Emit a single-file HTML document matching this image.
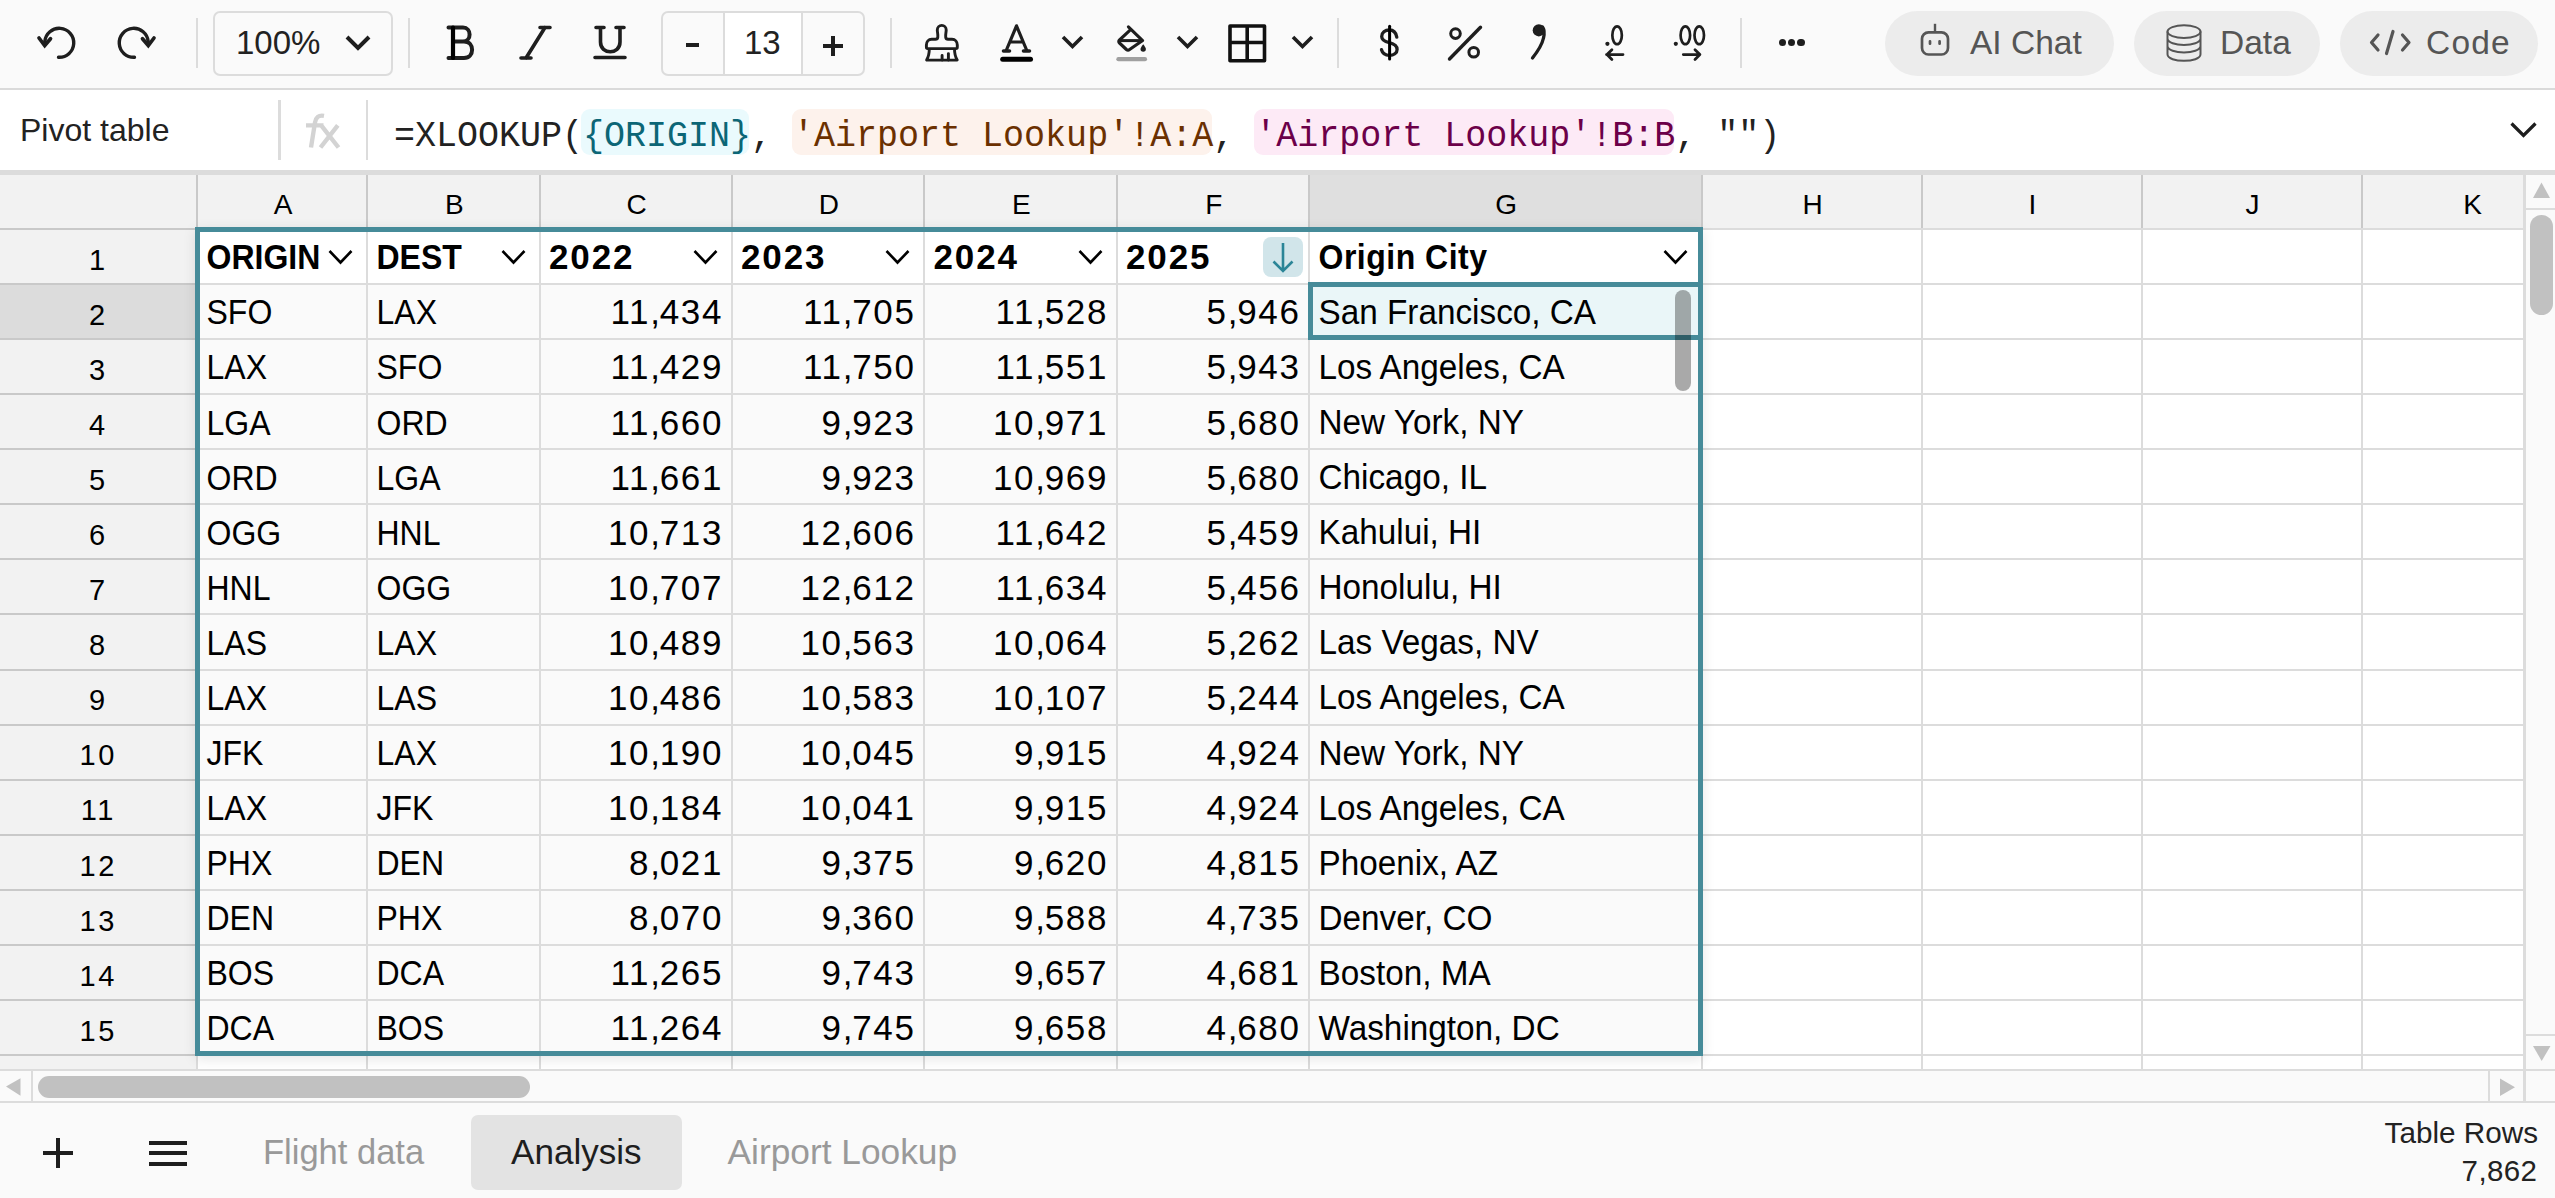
<!DOCTYPE html>
<html><head><meta charset="utf-8"><title>Sheet</title>
<style>
html,body{margin:0;padding:0;}
body{width:2555px;height:1198px;position:relative;overflow:hidden;background:#fafafa;font-family:'Liberation Sans', sans-serif;}
body>div,body>svg{position:absolute;box-sizing:content-box;}
</style></head><body>
<div style="left:0px;top:0px;width:2555px;height:88px;background:#fafafa;"></div>
<div style="left:0px;top:88px;width:2555px;height:2px;background:#dadada;"></div>
<div style="left:0px;top:90px;width:2555px;height:80px;background:#ffffff;"></div>
<div style="left:0px;top:170px;width:2555px;height:5px;background:#dcdcdc;"></div>
<svg style="left:30px;top:20px;" width="60" height="50" viewBox="0 0 60 50"><path d="M28.5 37.3 A14.5 14.5 0 1 0 14.8 21.5" fill="none" stroke="#1e1e1e" stroke-width="3.4" stroke-linecap="round"/><path d="M9 18 L14.7 25.5 L20.5 18.7" fill="none" stroke="#1e1e1e" stroke-width="3.7" stroke-linecap="round" stroke-linejoin="miter"/></svg>
<svg style="left:106px;top:20px;" width="60" height="50" viewBox="0 0 60 50"><path d="M28.5 37.3 A14.5 14.5 0 1 1 42.2 21.5" fill="none" stroke="#1e1e1e" stroke-width="3.4" stroke-linecap="round"/><path d="M48 18 L42.3 25.5 L36.5 18.7" fill="none" stroke="#1e1e1e" stroke-width="3.7" stroke-linecap="round" stroke-linejoin="miter"/></svg>
<div style="left:196px;top:18px;width:2px;height:50px;background:#dcdcdc;"></div>
<div style="left:408px;top:18px;width:2px;height:50px;background:#dcdcdc;"></div>
<div style="left:890px;top:18px;width:2px;height:50px;background:#dcdcdc;"></div>
<div style="left:1337px;top:18px;width:2px;height:50px;background:#dcdcdc;"></div>
<div style="left:1740px;top:18px;width:2px;height:50px;background:#dcdcdc;"></div>
<div style="left:213px;top:11px;width:176px;height:61px;border:2px solid #dcdcdc;border-radius:7px;background:#fafafa"></div>
<div style="top:12.86px;height:60px;line-height:60px;font-size:33px;color:#222;font-family:'Liberation Sans', sans-serif;white-space:pre;left:236.00px;">100%</div>
<svg style="left:340px;top:30px;" width="36" height="26" viewBox="0 0 36 26"><path d="M7 7 L18 18 L29 7" fill="none" stroke="#1e1e1e" stroke-width="4"/></svg>
<svg style="left:440px;top:20px;" width="40" height="46" viewBox="0 0 40 46"><path d="M8.5 7.5 H23 C31.8 7.5 31.8 21.5 23 21.5 H13 M13 21.5 H24 C34.8 21.5 34.8 38 24 38 H8.5" fill="none" stroke="#1e1e1e" stroke-width="4" stroke-linecap="round" stroke-linejoin="round"/><path d="M13 7.5 V38" fill="none" stroke="#000" stroke-width="4.2" stroke-linecap="round"/></svg>
<svg style="left:510px;top:20px;" width="50" height="46" viewBox="0 0 50 46"><path d="M30 7.5 H40 M11 38 H21 M35 7.5 L16 38" fill="none" stroke="#1e1e1e" stroke-width="3.6" stroke-linecap="round"/></svg>
<svg style="left:585px;top:20px;" width="50" height="46" viewBox="0 0 50 46"><path d="M11 7.5 H19 M31 7.5 H39 M15.5 7.5 V22 C15.5 35 35 35 35 22 V7.5 M10 37.5 H40" fill="none" stroke="#1e1e1e" stroke-width="3.6" stroke-linecap="round"/></svg>
<div style="left:661px;top:11px;width:200px;height:61px;border:2px solid #dcdcdc;border-radius:7px;background:#fafafa;overflow:hidden"><div style="position:absolute;left:60px;top:0;width:76px;height:61px;background:#fff;border-left:2px solid #dcdcdc;border-right:2px solid #dcdcdc"></div></div>
<div style="left:686px;top:42.5px;width:13px;height:4px;background:#1e1e1e;"></div>
<div style="top:12.86px;height:60px;line-height:60px;font-size:33px;color:#222;font-family:'Liberation Sans', sans-serif;white-space:pre;left:744.00px;">13</div>
<div style="left:822.5px;top:43.5px;width:20px;height:4px;background:#1e1e1e;"></div>
<div style="left:830.5px;top:35.5px;width:4px;height:20px;background:#1e1e1e;"></div>
<svg style="left:920px;top:20px;" width="44" height="46" viewBox="0 0 44 46"><path d="M17.8 17.2 C18.2 15 17.3 12 17.3 10 C17.3 7.3 19.3 5.4 21.75 5.4 C24.2 5.4 26.2 7.3 26.2 10 C26.2 12 25.3 15 25.7 17.2 C25.9 18.5 26.8 19.2 28 19.2 H32 C35.2 19.2 37.3 21.7 37.3 25 V27.3 C37.3 28.1 36.8 28.6 36 28.6 H7.7 C6.9 28.6 6.4 28.1 6.4 27.3 V25 C6.4 21.7 8.5 19.2 11.7 19.2 H15.5 C16.7 19.2 17.6 18.5 17.8 17.2 Z" fill="none" stroke="#1e1e1e" stroke-width="2.9" stroke-linejoin="round"/><path d="M9.3 28.6 C9.3 33 8.5 37 6.6 40.1 H37.2 C35.3 37 34.5 33 34.5 28.6" fill="none" stroke="#1e1e1e" stroke-width="2.9" stroke-linejoin="round"/><path d="M22.1 35.5 V40.1 M28.4 33.6 V40.1" fill="none" stroke="#1e1e1e" stroke-width="2.9" stroke-linecap="round"/></svg>
<svg style="left:995px;top:20px;" width="44" height="46" viewBox="0 0 44 46"><path d="M11 31 L21.5 5.8 L32 31 M15.3 22 H27.7" fill="none" stroke="#1e1e1e" stroke-width="3.2" stroke-linejoin="round"/><path d="M8.5 31 H14.5 M28.5 31 H34.5" fill="none" stroke="#1e1e1e" stroke-width="3.6" stroke-linecap="round"/><path d="M7.7 39.3 H35.5" fill="none" stroke="#000" stroke-width="5" stroke-linecap="round"/></svg>
<svg style="left:1055px;top:30px;" width="36" height="26" viewBox="0 0 36 26"><path d="M8 7 L17.5 16.5 L27 7" fill="none" stroke="#1e1e1e" stroke-width="3.6"/></svg>
<svg style="left:1110px;top:20px;" width="44" height="46" viewBox="0 0 44 46"><path d="M18.4 6.8 L32.6 20.6 L19.6 29.6 C18.7 30.3 17.3 30.3 16.4 29.5 L9.5 23 C8.5 22.1 8.5 20.9 9.5 20 L20.6 9.6" fill="none" stroke="#1e1e1e" stroke-width="3.1" stroke-linecap="round" stroke-linejoin="round"/><path d="M9 20.6 H32.6" fill="none" stroke="#1e1e1e" stroke-width="3"/><path d="M33.2 24.2 C35 26.5 35.9 28 35.9 29 A2.7 2.7 0 0 1 30.5 29 C30.5 28 31.4 26.5 33.2 24.2 Z" fill="#1e1e1e"/><path d="M8.4 39.2 H35" fill="none" stroke="#a0a0a0" stroke-width="4.2" stroke-linecap="round"/></svg>
<svg style="left:1170px;top:30px;" width="36" height="26" viewBox="0 0 36 26"><path d="M8 7 L17.5 16.5 L27 7" fill="none" stroke="#1e1e1e" stroke-width="3.6"/></svg>
<svg style="left:1222px;top:18px;" width="50" height="50" viewBox="0 0 50 50"><path d="M8 8 H42.5 V42.7 H8 Z M25.2 8 V42.7 M8 24.5 H42.5" fill="none" stroke="#111" stroke-width="3.6" stroke-linejoin="round"/></svg>
<svg style="left:1285px;top:30px;" width="36" height="26" viewBox="0 0 36 26"><path d="M8 7 L17.5 16.5 L27 7" fill="none" stroke="#1e1e1e" stroke-width="3.6"/></svg>
<svg style="left:1370px;top:20px;" width="40" height="46" viewBox="0 0 40 46"><path d="M26.8 17.2 C26 12.5 23 10 19.4 10 C15 10 11.7 12.8 11.7 16.4 C11.7 20 14.5 21.5 19.4 22.7 C24.5 24 27.1 26 27.1 29.5 C27.1 33 23.8 35.3 19.4 35.3 C15.5 35.3 12.5 33.2 11.5 29.7" fill="none" stroke="#1e1e1e" stroke-width="3.3" stroke-linecap="round"/><path d="M19.6 6.2 V39" fill="none" stroke="#000" stroke-width="3" stroke-linecap="round"/></svg>
<svg style="left:1440px;top:20px;" width="50" height="46" viewBox="0 0 50 46"><path d="M9.5 39 L40.5 7.2" fill="none" stroke="#1e1e1e" stroke-width="3.4" stroke-linecap="round"/><circle cx="15.5" cy="13.6" r="4.8" fill="none" stroke="#1e1e1e" stroke-width="3"/><circle cx="33.7" cy="32.2" r="4.8" fill="none" stroke="#1e1e1e" stroke-width="3"/></svg>
<svg style="left:1520px;top:20px;" width="40" height="46" viewBox="0 0 40 46"><circle cx="18.8" cy="10.3" r="6.1" fill="#1e1e1e"/><path d="M22.5 7 C24.5 10 24.5 14 23.5 18 C22 25 18 31 12.5 38" fill="none" stroke="#1e1e1e" stroke-width="3.3" stroke-linecap="round"/></svg>
<svg style="left:1595px;top:18px;" width="120" height="48" viewBox="0 0 120 48"><circle cx="12.4" cy="25.8" r="2.1" fill="#1e1e1e"/><ellipse cx="22.1" cy="17.25" rx="4.75" ry="8.95" fill="none" stroke="#1e1e1e" stroke-width="2.7"/><path d="M11.5 36.6 H28 M16.9 31.7 L12 36.6 L16.9 41.5" fill="none" stroke="#1e1e1e" stroke-width="2.8" stroke-linecap="round" stroke-linejoin="round"/><circle cx="80.8" cy="25.8" r="2.1" fill="#1e1e1e"/><ellipse cx="90.35" cy="17.25" rx="4.75" ry="8.95" fill="none" stroke="#1e1e1e" stroke-width="2.7"/><ellipse cx="104.25" cy="17.25" rx="4.75" ry="8.95" fill="none" stroke="#1e1e1e" stroke-width="2.7"/><path d="M88.3 36.6 H104.8 M100 31.7 L104.9 36.6 L100 41.5" fill="none" stroke="#1e1e1e" stroke-width="2.8" stroke-linecap="round" stroke-linejoin="round"/></svg>
<div style="left:1778.5px;top:39px;width:7.2px;height:7.2px;border-radius:50%;background:#1e1e1e"></div>
<div style="left:1787.9px;top:39px;width:7.2px;height:7.2px;border-radius:50%;background:#1e1e1e"></div>
<div style="left:1797.4px;top:39px;width:7.2px;height:7.2px;border-radius:50%;background:#1e1e1e"></div>
<div style="left:1885px;top:11px;width:229px;height:65px;border-radius:33px;background:#ececec"></div>
<div style="left:2134px;top:11px;width:186px;height:65px;border-radius:33px;background:#ececec"></div>
<div style="left:2340px;top:11px;width:198px;height:65px;border-radius:33px;background:#ececec"></div>
<svg style="left:1915px;top:20px;" width="40" height="40" viewBox="0 0 40 40"><rect x="7" y="12.3" width="26" height="22.2" rx="6.5" fill="none" stroke="#555555" stroke-width="2.7"/><path d="M20 3.8 V12.3" stroke="#555555" stroke-width="2.4"/><path d="M15 21.3 V23.7 M24.6 21.3 V23.7" stroke="#555555" stroke-width="2.7" stroke-linecap="round"/></svg>
<div style="top:13.39px;height:60px;line-height:60px;font-size:33.5px;color:#555555;font-family:'Liberation Sans', sans-serif;white-space:pre;left:1970.00px;">AI Chat</div>
<svg style="left:2163px;top:20px;" width="44" height="46" viewBox="0 0 44 46"><ellipse cx="21" cy="11.6" rx="16.5" ry="6.4" fill="none" stroke="#555555" stroke-width="2"/><path d="M4.5 11.6 V34.3 C4.5 43 37.5 43 37.5 34.3 V11.6 M4.5 18.5 C4.5 27 37.5 27 37.5 18.5 M4.5 26 C4.5 34.5 37.5 34.5 37.5 26" fill="none" stroke="#555555" stroke-width="2"/></svg>
<div style="top:13.39px;height:60px;line-height:60px;font-size:33.5px;color:#555555;font-family:'Liberation Sans', sans-serif;white-space:pre;left:2220.00px;">Data</div>
<svg style="left:2365px;top:20px;" width="50" height="46" viewBox="0 0 50 46"><path d="M13 15 L6.5 22.5 L13 30 M37.5 15 L44 22.5 L37.5 30 M28 11.5 L21.5 33.5" fill="none" stroke="#555555" stroke-width="3.2" stroke-linecap="round" stroke-linejoin="round"/></svg>
<div style="top:13.39px;height:60px;line-height:60px;font-size:33.5px;color:#555555;font-family:'Liberation Sans', sans-serif;white-space:pre;letter-spacing:1.2px;left:2426.00px;">Code</div>
<div style="top:100.31px;height:60px;line-height:60px;font-size:32px;color:#222;font-family:'Liberation Sans', sans-serif;white-space:pre;left:20.00px;">Pivot table</div>
<div style="left:278px;top:100px;width:3px;height:60px;background:#dcdcdc;"></div>
<svg style="left:300px;top:105px;" width="45" height="50" viewBox="0 0 45 50"><path d="M24 10.8 C18.5 9.8 15.8 12.5 15 17.5 L11 42.5 M6 20.4 H23.5 M21.2 20.4 L38.5 42.5 M37.8 20.4 L20.5 42.5" fill="none" stroke="#d3d3d3" stroke-width="4.4"/></svg>
<div style="left:366px;top:100px;width:2px;height:60px;background:#dcdcdc;"></div>
<div style="left:581px;top:109px;width:168px;height:46px;border-radius:9px;background:#eafafd"></div>
<div style="left:792px;top:109px;width:420px;height:46px;border-radius:9px;background:#fdf2ec"></div>
<div style="left:1254px;top:109px;width:420px;height:46px;border-radius:9px;background:#fdeaf6"></div>
<div style="top:106.87px;height:60px;line-height:60px;font-size:35px;color:#222;font-family:'Liberation Mono', monospace;white-space:pre;transform:scaleY(1.075);transform-origin:0 42.13px;left:394.00px;"><span style="color:#222">=XLOOKUP(</span><span style="color:#0c6676">{ORIGIN}</span><span style="color:#222">, </span><span style="color:#6b3000">'Airport Lookup'!A:A</span><span style="color:#222">, </span><span style="color:#6c0049">'Airport Lookup'!B:B</span><span style="color:#222">, "")</span></div>
<svg style="left:2502px;top:113px;" width="40" height="32" viewBox="0 0 40 32"><path d="M9.5 10.5 L21.5 22.5 L33.5 10.5" fill="none" stroke="#1e1e1e" stroke-width="3.2"/></svg>
<div style="left:198px;top:230px;width:2325px;height:839px;background:#ffffff;"></div>
<div style="left:197px;top:284px;width:1505px;height:772px;background:#fafafa;"></div>
<div style="left:0px;top:175px;width:196px;height:894px;background:#f2f2f2;"></div>
<div style="left:196px;top:175px;width:2327px;height:53px;background:#f2f2f2;"></div>
<div style="left:1309px;top:175px;width:392.5px;height:53px;background:#dfdfdf;"></div>
<div style="left:0px;top:285px;width:196px;height:53px;background:#dcdcdc;"></div>
<div style="left:198px;top:228px;width:2325px;height:2px;background:#c9c9c9;"></div>
<div style="left:0px;top:228px;width:196px;height:2px;background:#c9c9c9;"></div>
<div style="left:198px;top:283px;width:2325px;height:2px;background:#dcdcdc;"></div>
<div style="left:0px;top:283px;width:196px;height:2px;background:#c9c9c9;"></div>
<div style="left:198px;top:338px;width:2325px;height:2px;background:#dcdcdc;"></div>
<div style="left:0px;top:338px;width:196px;height:2px;background:#c9c9c9;"></div>
<div style="left:198px;top:393px;width:2325px;height:2px;background:#dcdcdc;"></div>
<div style="left:0px;top:393px;width:196px;height:2px;background:#c9c9c9;"></div>
<div style="left:198px;top:448px;width:2325px;height:2px;background:#dcdcdc;"></div>
<div style="left:0px;top:448px;width:196px;height:2px;background:#c9c9c9;"></div>
<div style="left:198px;top:503px;width:2325px;height:2px;background:#dcdcdc;"></div>
<div style="left:0px;top:503px;width:196px;height:2px;background:#c9c9c9;"></div>
<div style="left:198px;top:558px;width:2325px;height:2px;background:#dcdcdc;"></div>
<div style="left:0px;top:558px;width:196px;height:2px;background:#c9c9c9;"></div>
<div style="left:198px;top:613px;width:2325px;height:2px;background:#dcdcdc;"></div>
<div style="left:0px;top:613px;width:196px;height:2px;background:#c9c9c9;"></div>
<div style="left:198px;top:669px;width:2325px;height:2px;background:#dcdcdc;"></div>
<div style="left:0px;top:669px;width:196px;height:2px;background:#c9c9c9;"></div>
<div style="left:198px;top:724px;width:2325px;height:2px;background:#dcdcdc;"></div>
<div style="left:0px;top:724px;width:196px;height:2px;background:#c9c9c9;"></div>
<div style="left:198px;top:779px;width:2325px;height:2px;background:#dcdcdc;"></div>
<div style="left:0px;top:779px;width:196px;height:2px;background:#c9c9c9;"></div>
<div style="left:198px;top:834px;width:2325px;height:2px;background:#dcdcdc;"></div>
<div style="left:0px;top:834px;width:196px;height:2px;background:#c9c9c9;"></div>
<div style="left:198px;top:889px;width:2325px;height:2px;background:#dcdcdc;"></div>
<div style="left:0px;top:889px;width:196px;height:2px;background:#c9c9c9;"></div>
<div style="left:198px;top:944px;width:2325px;height:2px;background:#dcdcdc;"></div>
<div style="left:0px;top:944px;width:196px;height:2px;background:#c9c9c9;"></div>
<div style="left:198px;top:999px;width:2325px;height:2px;background:#dcdcdc;"></div>
<div style="left:0px;top:999px;width:196px;height:2px;background:#c9c9c9;"></div>
<div style="left:198px;top:1054px;width:2325px;height:2px;background:#dcdcdc;"></div>
<div style="left:0px;top:1054px;width:196px;height:2px;background:#c9c9c9;"></div>
<div style="left:0px;top:228px;width:196px;height:2px;background:#c9c9c9;"></div>
<div style="left:196px;top:227.5px;width:2327px;height:2.5px;background:#dcdcdc;"></div>
<div style="left:196px;top:175px;width:2px;height:55px;background:#c9c9c9;"></div>
<div style="left:196px;top:230px;width:2px;height:839px;background:#dcdcdc;"></div>
<div style="left:366px;top:175px;width:2px;height:53px;background:#c9c9c9;"></div>
<div style="left:366px;top:230px;width:2px;height:839px;background:#dcdcdc;"></div>
<div style="left:538.5px;top:175px;width:2px;height:53px;background:#c9c9c9;"></div>
<div style="left:538.5px;top:230px;width:2px;height:839px;background:#dcdcdc;"></div>
<div style="left:730.5px;top:175px;width:2px;height:53px;background:#c9c9c9;"></div>
<div style="left:730.5px;top:230px;width:2px;height:839px;background:#dcdcdc;"></div>
<div style="left:923px;top:175px;width:2px;height:53px;background:#c9c9c9;"></div>
<div style="left:923px;top:230px;width:2px;height:839px;background:#dcdcdc;"></div>
<div style="left:1115.5px;top:175px;width:2px;height:53px;background:#c9c9c9;"></div>
<div style="left:1115.5px;top:230px;width:2px;height:839px;background:#dcdcdc;"></div>
<div style="left:1308px;top:175px;width:2px;height:53px;background:#c9c9c9;"></div>
<div style="left:1308px;top:230px;width:2px;height:839px;background:#dcdcdc;"></div>
<div style="left:1700.5px;top:175px;width:2px;height:53px;background:#c9c9c9;"></div>
<div style="left:1700.5px;top:230px;width:2px;height:839px;background:#dcdcdc;"></div>
<div style="left:1920.5px;top:175px;width:2px;height:53px;background:#c9c9c9;"></div>
<div style="left:1920.5px;top:230px;width:2px;height:839px;background:#dcdcdc;"></div>
<div style="left:2140.5px;top:175px;width:2px;height:53px;background:#c9c9c9;"></div>
<div style="left:2140.5px;top:230px;width:2px;height:839px;background:#dcdcdc;"></div>
<div style="left:2360.5px;top:175px;width:2px;height:53px;background:#c9c9c9;"></div>
<div style="left:2360.5px;top:230px;width:2px;height:839px;background:#dcdcdc;"></div>
<div style="top:175.14px;height:60px;line-height:60px;font-size:28px;color:#000;font-family:'Liberation Sans', sans-serif;white-space:pre;left:-17.00px;width:600px;text-align:center;">A</div>
<div style="top:175.14px;height:60px;line-height:60px;font-size:28px;color:#000;font-family:'Liberation Sans', sans-serif;white-space:pre;left:154.25px;width:600px;text-align:center;">B</div>
<div style="top:175.14px;height:60px;line-height:60px;font-size:28px;color:#000;font-family:'Liberation Sans', sans-serif;white-space:pre;left:336.50px;width:600px;text-align:center;">C</div>
<div style="top:175.14px;height:60px;line-height:60px;font-size:28px;color:#000;font-family:'Liberation Sans', sans-serif;white-space:pre;left:528.75px;width:600px;text-align:center;">D</div>
<div style="top:175.14px;height:60px;line-height:60px;font-size:28px;color:#000;font-family:'Liberation Sans', sans-serif;white-space:pre;left:721.25px;width:600px;text-align:center;">E</div>
<div style="top:175.14px;height:60px;line-height:60px;font-size:28px;color:#000;font-family:'Liberation Sans', sans-serif;white-space:pre;left:913.75px;width:600px;text-align:center;">F</div>
<div style="top:175.14px;height:60px;line-height:60px;font-size:28px;color:#000;font-family:'Liberation Sans', sans-serif;white-space:pre;left:1206.25px;width:600px;text-align:center;">G</div>
<div style="top:175.14px;height:60px;line-height:60px;font-size:28px;color:#000;font-family:'Liberation Sans', sans-serif;white-space:pre;left:1512.50px;width:600px;text-align:center;">H</div>
<div style="top:175.14px;height:60px;line-height:60px;font-size:28px;color:#000;font-family:'Liberation Sans', sans-serif;white-space:pre;left:1732.50px;width:600px;text-align:center;">I</div>
<div style="top:175.14px;height:60px;line-height:60px;font-size:28px;color:#000;font-family:'Liberation Sans', sans-serif;white-space:pre;left:1952.50px;width:600px;text-align:center;">J</div>
<div style="top:175.14px;height:60px;line-height:60px;font-size:28px;color:#000;font-family:'Liberation Sans', sans-serif;white-space:pre;left:2172.50px;width:600px;text-align:center;">K</div>
<div style="top:229.75px;height:60px;line-height:60px;font-size:29px;color:#000;font-family:'Liberation Sans', sans-serif;white-space:pre;left:-203.00px;width:600px;text-align:center;">1</div>
<div style="top:284.82px;height:60px;line-height:60px;font-size:29px;color:#000;font-family:'Liberation Sans', sans-serif;white-space:pre;left:-203.00px;width:600px;text-align:center;">2</div>
<div style="top:339.89px;height:60px;line-height:60px;font-size:29px;color:#000;font-family:'Liberation Sans', sans-serif;white-space:pre;left:-203.00px;width:600px;text-align:center;">3</div>
<div style="top:394.96px;height:60px;line-height:60px;font-size:29px;color:#000;font-family:'Liberation Sans', sans-serif;white-space:pre;left:-203.00px;width:600px;text-align:center;">4</div>
<div style="top:450.03px;height:60px;line-height:60px;font-size:29px;color:#000;font-family:'Liberation Sans', sans-serif;white-space:pre;left:-203.00px;width:600px;text-align:center;">5</div>
<div style="top:505.10px;height:60px;line-height:60px;font-size:29px;color:#000;font-family:'Liberation Sans', sans-serif;white-space:pre;left:-203.00px;width:600px;text-align:center;">6</div>
<div style="top:560.17px;height:60px;line-height:60px;font-size:29px;color:#000;font-family:'Liberation Sans', sans-serif;white-space:pre;left:-203.00px;width:600px;text-align:center;">7</div>
<div style="top:615.24px;height:60px;line-height:60px;font-size:29px;color:#000;font-family:'Liberation Sans', sans-serif;white-space:pre;left:-203.00px;width:600px;text-align:center;">8</div>
<div style="top:670.31px;height:60px;line-height:60px;font-size:29px;color:#000;font-family:'Liberation Sans', sans-serif;white-space:pre;left:-203.00px;width:600px;text-align:center;">9</div>
<div style="top:725.38px;height:60px;line-height:60px;font-size:29px;color:#000;font-family:'Liberation Sans', sans-serif;white-space:pre;letter-spacing:2.5px;left:-201.75px;width:600px;text-align:center;">10</div>
<div style="top:780.45px;height:60px;line-height:60px;font-size:29px;color:#000;font-family:'Liberation Sans', sans-serif;white-space:pre;letter-spacing:2.5px;left:-201.75px;width:600px;text-align:center;">11</div>
<div style="top:835.52px;height:60px;line-height:60px;font-size:29px;color:#000;font-family:'Liberation Sans', sans-serif;white-space:pre;letter-spacing:2.5px;left:-201.75px;width:600px;text-align:center;">12</div>
<div style="top:890.59px;height:60px;line-height:60px;font-size:29px;color:#000;font-family:'Liberation Sans', sans-serif;white-space:pre;letter-spacing:2.5px;left:-201.75px;width:600px;text-align:center;">13</div>
<div style="top:945.66px;height:60px;line-height:60px;font-size:29px;color:#000;font-family:'Liberation Sans', sans-serif;white-space:pre;letter-spacing:2.5px;left:-201.75px;width:600px;text-align:center;">14</div>
<div style="top:1000.73px;height:60px;line-height:60px;font-size:29px;color:#000;font-family:'Liberation Sans', sans-serif;white-space:pre;letter-spacing:2.5px;left:-201.75px;width:600px;text-align:center;">15</div>
<div style="left:195px;top:227px;width:1508px;height:829px;box-shadow:0 3px 12px rgba(0,0,0,0.10)"></div>
<div style="left:198px;top:230px;width:1503px;height:54px;background:#ffffff;"></div>
<div style="left:198px;top:283px;width:1503px;height:2px;background:#dcdcdc;"></div>
<div style="left:198px;top:338px;width:1503px;height:2px;background:#dcdcdc;"></div>
<div style="left:198px;top:393px;width:1503px;height:2px;background:#dcdcdc;"></div>
<div style="left:198px;top:448px;width:1503px;height:2px;background:#dcdcdc;"></div>
<div style="left:198px;top:503px;width:1503px;height:2px;background:#dcdcdc;"></div>
<div style="left:198px;top:558px;width:1503px;height:2px;background:#dcdcdc;"></div>
<div style="left:198px;top:613px;width:1503px;height:2px;background:#dcdcdc;"></div>
<div style="left:198px;top:669px;width:1503px;height:2px;background:#dcdcdc;"></div>
<div style="left:198px;top:724px;width:1503px;height:2px;background:#dcdcdc;"></div>
<div style="left:198px;top:779px;width:1503px;height:2px;background:#dcdcdc;"></div>
<div style="left:198px;top:834px;width:1503px;height:2px;background:#dcdcdc;"></div>
<div style="left:198px;top:889px;width:1503px;height:2px;background:#dcdcdc;"></div>
<div style="left:198px;top:944px;width:1503px;height:2px;background:#dcdcdc;"></div>
<div style="left:198px;top:999px;width:1503px;height:2px;background:#dcdcdc;"></div>
<div style="left:366px;top:230px;width:2px;height:826px;background:#dcdcdc;"></div>
<div style="left:538.5px;top:230px;width:2px;height:826px;background:#dcdcdc;"></div>
<div style="left:730.5px;top:230px;width:2px;height:826px;background:#dcdcdc;"></div>
<div style="left:923px;top:230px;width:2px;height:826px;background:#dcdcdc;"></div>
<div style="left:1115.5px;top:230px;width:2px;height:826px;background:#dcdcdc;"></div>
<div style="left:1308px;top:230px;width:2px;height:826px;background:#dcdcdc;"></div>
<div style="top:227.91px;height:60px;line-height:60px;font-size:32px;color:#000;font-family:'Liberation Sans', sans-serif;white-space:pre;font-weight:700;transform:scaleY(1.086);transform-origin:0 41.09px;left:206.50px;">ORIGIN</div>
<div style="top:227.91px;height:60px;line-height:60px;font-size:32px;color:#000;font-family:'Liberation Sans', sans-serif;white-space:pre;font-weight:700;transform:scaleY(1.086);transform-origin:0 41.09px;left:376.50px;">DEST</div>
<div style="top:226.87px;height:60px;line-height:60px;font-size:35px;color:#000;font-family:'Liberation Sans', sans-serif;white-space:pre;font-weight:700;letter-spacing:1.9px;left:549.00px;">2022</div>
<div style="top:226.87px;height:60px;line-height:60px;font-size:35px;color:#000;font-family:'Liberation Sans', sans-serif;white-space:pre;font-weight:700;letter-spacing:1.9px;left:741.00px;">2023</div>
<div style="top:226.87px;height:60px;line-height:60px;font-size:35px;color:#000;font-family:'Liberation Sans', sans-serif;white-space:pre;font-weight:700;letter-spacing:1.9px;left:933.50px;">2024</div>
<div style="top:226.87px;height:60px;line-height:60px;font-size:35px;color:#000;font-family:'Liberation Sans', sans-serif;white-space:pre;font-weight:700;letter-spacing:1.9px;left:1126.00px;">2025</div>
<div style="top:227.91px;height:60px;line-height:60px;font-size:32px;color:#000;font-family:'Liberation Sans', sans-serif;white-space:pre;font-weight:700;letter-spacing:0.5px;transform:scaleY(1.086);transform-origin:0 41.09px;left:1318.50px;">Origin City</div>
<svg style="left:325px;top:244px;" width="32" height="26" viewBox="0 0 32 26"><path d="M4.5 7 L15.5 18.5 L26.5 7" fill="none" stroke="#000" stroke-width="2.6"/></svg>
<svg style="left:497.5px;top:244px;" width="32" height="26" viewBox="0 0 32 26"><path d="M4.5 7 L15.5 18.5 L26.5 7" fill="none" stroke="#000" stroke-width="2.6"/></svg>
<svg style="left:689.5px;top:244px;" width="32" height="26" viewBox="0 0 32 26"><path d="M4.5 7 L15.5 18.5 L26.5 7" fill="none" stroke="#000" stroke-width="2.6"/></svg>
<svg style="left:882px;top:244px;" width="32" height="26" viewBox="0 0 32 26"><path d="M4.5 7 L15.5 18.5 L26.5 7" fill="none" stroke="#000" stroke-width="2.6"/></svg>
<svg style="left:1074.5px;top:244px;" width="32" height="26" viewBox="0 0 32 26"><path d="M4.5 7 L15.5 18.5 L26.5 7" fill="none" stroke="#000" stroke-width="2.6"/></svg>
<svg style="left:1659.5px;top:244px;" width="32" height="26" viewBox="0 0 32 26"><path d="M4.5 7 L15.5 18.5 L26.5 7" fill="none" stroke="#000" stroke-width="2.6"/></svg>
<div style="left:1263px;top:237px;width:40px;height:40px;border-radius:8px;background:#d1e5ea"></div>
<svg style="left:1263px;top:237px;" width="40" height="40" viewBox="0 0 40 40"><path d="M20 6 V33.5 M10.5 24.5 L20 34 L29.5 24.5" fill="none" stroke="#2b8597" stroke-width="2.6"/></svg>
<div style="left:1308px;top:282px;width:385px;height:48px;border:5px solid #468b99;background:#eaf6f8"></div>
<div style="top:283.41px;height:60px;line-height:60px;font-size:32px;color:#000;font-family:'Liberation Sans', sans-serif;white-space:pre;transform:scaleY(1.077);transform-origin:0 41.09px;left:206.50px;">SFO</div>
<div style="top:283.41px;height:60px;line-height:60px;font-size:32px;color:#000;font-family:'Liberation Sans', sans-serif;white-space:pre;transform:scaleY(1.077);transform-origin:0 41.09px;left:376.50px;">LAX</div>
<div style="top:282.37px;height:60px;line-height:60px;font-size:35px;color:#000;font-family:'Liberation Sans', sans-serif;white-space:pre;letter-spacing:1.7px;right:1831.80px;text-align:right;">11<span style="margin-right:-2px">,</span>434</div>
<div style="top:282.37px;height:60px;line-height:60px;font-size:35px;color:#000;font-family:'Liberation Sans', sans-serif;white-space:pre;letter-spacing:1.7px;right:1639.30px;text-align:right;">11<span style="margin-right:-2px">,</span>705</div>
<div style="top:282.37px;height:60px;line-height:60px;font-size:35px;color:#000;font-family:'Liberation Sans', sans-serif;white-space:pre;letter-spacing:1.7px;right:1446.80px;text-align:right;">11<span style="margin-right:-2px">,</span>528</div>
<div style="top:282.37px;height:60px;line-height:60px;font-size:35px;color:#000;font-family:'Liberation Sans', sans-serif;white-space:pre;letter-spacing:1.7px;right:1254.30px;text-align:right;">5<span style="margin-right:-2px">,</span>946</div>
<div style="top:282.95px;height:60px;line-height:60px;font-size:33.3px;color:#000;font-family:'Liberation Sans', sans-serif;white-space:pre;transform:scaleY(1.04);transform-origin:0 41.55px;left:1318.50px;">San Francisco, CA</div>
<div style="top:338.48px;height:60px;line-height:60px;font-size:32px;color:#000;font-family:'Liberation Sans', sans-serif;white-space:pre;transform:scaleY(1.077);transform-origin:0 41.09px;left:206.50px;">LAX</div>
<div style="top:338.48px;height:60px;line-height:60px;font-size:32px;color:#000;font-family:'Liberation Sans', sans-serif;white-space:pre;transform:scaleY(1.077);transform-origin:0 41.09px;left:376.50px;">SFO</div>
<div style="top:337.44px;height:60px;line-height:60px;font-size:35px;color:#000;font-family:'Liberation Sans', sans-serif;white-space:pre;letter-spacing:1.7px;right:1831.80px;text-align:right;">11<span style="margin-right:-2px">,</span>429</div>
<div style="top:337.44px;height:60px;line-height:60px;font-size:35px;color:#000;font-family:'Liberation Sans', sans-serif;white-space:pre;letter-spacing:1.7px;right:1639.30px;text-align:right;">11<span style="margin-right:-2px">,</span>750</div>
<div style="top:337.44px;height:60px;line-height:60px;font-size:35px;color:#000;font-family:'Liberation Sans', sans-serif;white-space:pre;letter-spacing:1.7px;right:1446.80px;text-align:right;">11<span style="margin-right:-2px">,</span>551</div>
<div style="top:337.44px;height:60px;line-height:60px;font-size:35px;color:#000;font-family:'Liberation Sans', sans-serif;white-space:pre;letter-spacing:1.7px;right:1254.30px;text-align:right;">5<span style="margin-right:-2px">,</span>943</div>
<div style="top:338.02px;height:60px;line-height:60px;font-size:33.3px;color:#000;font-family:'Liberation Sans', sans-serif;white-space:pre;transform:scaleY(1.04);transform-origin:0 41.55px;left:1318.50px;">Los Angeles, CA</div>
<div style="top:393.55px;height:60px;line-height:60px;font-size:32px;color:#000;font-family:'Liberation Sans', sans-serif;white-space:pre;transform:scaleY(1.077);transform-origin:0 41.09px;left:206.50px;">LGA</div>
<div style="top:393.55px;height:60px;line-height:60px;font-size:32px;color:#000;font-family:'Liberation Sans', sans-serif;white-space:pre;transform:scaleY(1.077);transform-origin:0 41.09px;left:376.50px;">ORD</div>
<div style="top:392.51px;height:60px;line-height:60px;font-size:35px;color:#000;font-family:'Liberation Sans', sans-serif;white-space:pre;letter-spacing:1.7px;right:1831.80px;text-align:right;">11<span style="margin-right:-2px">,</span>660</div>
<div style="top:392.51px;height:60px;line-height:60px;font-size:35px;color:#000;font-family:'Liberation Sans', sans-serif;white-space:pre;letter-spacing:1.7px;right:1639.30px;text-align:right;">9<span style="margin-right:-2px">,</span>923</div>
<div style="top:392.51px;height:60px;line-height:60px;font-size:35px;color:#000;font-family:'Liberation Sans', sans-serif;white-space:pre;letter-spacing:1.7px;right:1446.80px;text-align:right;">10<span style="margin-right:-2px">,</span>971</div>
<div style="top:392.51px;height:60px;line-height:60px;font-size:35px;color:#000;font-family:'Liberation Sans', sans-serif;white-space:pre;letter-spacing:1.7px;right:1254.30px;text-align:right;">5<span style="margin-right:-2px">,</span>680</div>
<div style="top:393.09px;height:60px;line-height:60px;font-size:33.3px;color:#000;font-family:'Liberation Sans', sans-serif;white-space:pre;transform:scaleY(1.04);transform-origin:0 41.55px;left:1318.50px;">New York, NY</div>
<div style="top:448.62px;height:60px;line-height:60px;font-size:32px;color:#000;font-family:'Liberation Sans', sans-serif;white-space:pre;transform:scaleY(1.077);transform-origin:0 41.09px;left:206.50px;">ORD</div>
<div style="top:448.62px;height:60px;line-height:60px;font-size:32px;color:#000;font-family:'Liberation Sans', sans-serif;white-space:pre;transform:scaleY(1.077);transform-origin:0 41.09px;left:376.50px;">LGA</div>
<div style="top:447.58px;height:60px;line-height:60px;font-size:35px;color:#000;font-family:'Liberation Sans', sans-serif;white-space:pre;letter-spacing:1.7px;right:1831.80px;text-align:right;">11<span style="margin-right:-2px">,</span>661</div>
<div style="top:447.58px;height:60px;line-height:60px;font-size:35px;color:#000;font-family:'Liberation Sans', sans-serif;white-space:pre;letter-spacing:1.7px;right:1639.30px;text-align:right;">9<span style="margin-right:-2px">,</span>923</div>
<div style="top:447.58px;height:60px;line-height:60px;font-size:35px;color:#000;font-family:'Liberation Sans', sans-serif;white-space:pre;letter-spacing:1.7px;right:1446.80px;text-align:right;">10<span style="margin-right:-2px">,</span>969</div>
<div style="top:447.58px;height:60px;line-height:60px;font-size:35px;color:#000;font-family:'Liberation Sans', sans-serif;white-space:pre;letter-spacing:1.7px;right:1254.30px;text-align:right;">5<span style="margin-right:-2px">,</span>680</div>
<div style="top:448.16px;height:60px;line-height:60px;font-size:33.3px;color:#000;font-family:'Liberation Sans', sans-serif;white-space:pre;transform:scaleY(1.04);transform-origin:0 41.55px;left:1318.50px;">Chicago, IL</div>
<div style="top:503.69px;height:60px;line-height:60px;font-size:32px;color:#000;font-family:'Liberation Sans', sans-serif;white-space:pre;transform:scaleY(1.077);transform-origin:0 41.09px;left:206.50px;">OGG</div>
<div style="top:503.69px;height:60px;line-height:60px;font-size:32px;color:#000;font-family:'Liberation Sans', sans-serif;white-space:pre;transform:scaleY(1.077);transform-origin:0 41.09px;left:376.50px;">HNL</div>
<div style="top:502.65px;height:60px;line-height:60px;font-size:35px;color:#000;font-family:'Liberation Sans', sans-serif;white-space:pre;letter-spacing:1.7px;right:1831.80px;text-align:right;">10<span style="margin-right:-2px">,</span>713</div>
<div style="top:502.65px;height:60px;line-height:60px;font-size:35px;color:#000;font-family:'Liberation Sans', sans-serif;white-space:pre;letter-spacing:1.7px;right:1639.30px;text-align:right;">12<span style="margin-right:-2px">,</span>606</div>
<div style="top:502.65px;height:60px;line-height:60px;font-size:35px;color:#000;font-family:'Liberation Sans', sans-serif;white-space:pre;letter-spacing:1.7px;right:1446.80px;text-align:right;">11<span style="margin-right:-2px">,</span>642</div>
<div style="top:502.65px;height:60px;line-height:60px;font-size:35px;color:#000;font-family:'Liberation Sans', sans-serif;white-space:pre;letter-spacing:1.7px;right:1254.30px;text-align:right;">5<span style="margin-right:-2px">,</span>459</div>
<div style="top:503.23px;height:60px;line-height:60px;font-size:33.3px;color:#000;font-family:'Liberation Sans', sans-serif;white-space:pre;transform:scaleY(1.04);transform-origin:0 41.55px;left:1318.50px;">Kahului, HI</div>
<div style="top:558.76px;height:60px;line-height:60px;font-size:32px;color:#000;font-family:'Liberation Sans', sans-serif;white-space:pre;transform:scaleY(1.077);transform-origin:0 41.09px;left:206.50px;">HNL</div>
<div style="top:558.76px;height:60px;line-height:60px;font-size:32px;color:#000;font-family:'Liberation Sans', sans-serif;white-space:pre;transform:scaleY(1.077);transform-origin:0 41.09px;left:376.50px;">OGG</div>
<div style="top:557.72px;height:60px;line-height:60px;font-size:35px;color:#000;font-family:'Liberation Sans', sans-serif;white-space:pre;letter-spacing:1.7px;right:1831.80px;text-align:right;">10<span style="margin-right:-2px">,</span>707</div>
<div style="top:557.72px;height:60px;line-height:60px;font-size:35px;color:#000;font-family:'Liberation Sans', sans-serif;white-space:pre;letter-spacing:1.7px;right:1639.30px;text-align:right;">12<span style="margin-right:-2px">,</span>612</div>
<div style="top:557.72px;height:60px;line-height:60px;font-size:35px;color:#000;font-family:'Liberation Sans', sans-serif;white-space:pre;letter-spacing:1.7px;right:1446.80px;text-align:right;">11<span style="margin-right:-2px">,</span>634</div>
<div style="top:557.72px;height:60px;line-height:60px;font-size:35px;color:#000;font-family:'Liberation Sans', sans-serif;white-space:pre;letter-spacing:1.7px;right:1254.30px;text-align:right;">5<span style="margin-right:-2px">,</span>456</div>
<div style="top:558.30px;height:60px;line-height:60px;font-size:33.3px;color:#000;font-family:'Liberation Sans', sans-serif;white-space:pre;transform:scaleY(1.04);transform-origin:0 41.55px;left:1318.50px;">Honolulu, HI</div>
<div style="top:613.83px;height:60px;line-height:60px;font-size:32px;color:#000;font-family:'Liberation Sans', sans-serif;white-space:pre;transform:scaleY(1.077);transform-origin:0 41.09px;left:206.50px;">LAS</div>
<div style="top:613.83px;height:60px;line-height:60px;font-size:32px;color:#000;font-family:'Liberation Sans', sans-serif;white-space:pre;transform:scaleY(1.077);transform-origin:0 41.09px;left:376.50px;">LAX</div>
<div style="top:612.79px;height:60px;line-height:60px;font-size:35px;color:#000;font-family:'Liberation Sans', sans-serif;white-space:pre;letter-spacing:1.7px;right:1831.80px;text-align:right;">10<span style="margin-right:-2px">,</span>489</div>
<div style="top:612.79px;height:60px;line-height:60px;font-size:35px;color:#000;font-family:'Liberation Sans', sans-serif;white-space:pre;letter-spacing:1.7px;right:1639.30px;text-align:right;">10<span style="margin-right:-2px">,</span>563</div>
<div style="top:612.79px;height:60px;line-height:60px;font-size:35px;color:#000;font-family:'Liberation Sans', sans-serif;white-space:pre;letter-spacing:1.7px;right:1446.80px;text-align:right;">10<span style="margin-right:-2px">,</span>064</div>
<div style="top:612.79px;height:60px;line-height:60px;font-size:35px;color:#000;font-family:'Liberation Sans', sans-serif;white-space:pre;letter-spacing:1.7px;right:1254.30px;text-align:right;">5<span style="margin-right:-2px">,</span>262</div>
<div style="top:613.37px;height:60px;line-height:60px;font-size:33.3px;color:#000;font-family:'Liberation Sans', sans-serif;white-space:pre;transform:scaleY(1.04);transform-origin:0 41.55px;left:1318.50px;">Las Vegas, NV</div>
<div style="top:668.90px;height:60px;line-height:60px;font-size:32px;color:#000;font-family:'Liberation Sans', sans-serif;white-space:pre;transform:scaleY(1.077);transform-origin:0 41.09px;left:206.50px;">LAX</div>
<div style="top:668.90px;height:60px;line-height:60px;font-size:32px;color:#000;font-family:'Liberation Sans', sans-serif;white-space:pre;transform:scaleY(1.077);transform-origin:0 41.09px;left:376.50px;">LAS</div>
<div style="top:667.86px;height:60px;line-height:60px;font-size:35px;color:#000;font-family:'Liberation Sans', sans-serif;white-space:pre;letter-spacing:1.7px;right:1831.80px;text-align:right;">10<span style="margin-right:-2px">,</span>486</div>
<div style="top:667.86px;height:60px;line-height:60px;font-size:35px;color:#000;font-family:'Liberation Sans', sans-serif;white-space:pre;letter-spacing:1.7px;right:1639.30px;text-align:right;">10<span style="margin-right:-2px">,</span>583</div>
<div style="top:667.86px;height:60px;line-height:60px;font-size:35px;color:#000;font-family:'Liberation Sans', sans-serif;white-space:pre;letter-spacing:1.7px;right:1446.80px;text-align:right;">10<span style="margin-right:-2px">,</span>107</div>
<div style="top:667.86px;height:60px;line-height:60px;font-size:35px;color:#000;font-family:'Liberation Sans', sans-serif;white-space:pre;letter-spacing:1.7px;right:1254.30px;text-align:right;">5<span style="margin-right:-2px">,</span>244</div>
<div style="top:668.44px;height:60px;line-height:60px;font-size:33.3px;color:#000;font-family:'Liberation Sans', sans-serif;white-space:pre;transform:scaleY(1.04);transform-origin:0 41.55px;left:1318.50px;">Los Angeles, CA</div>
<div style="top:723.97px;height:60px;line-height:60px;font-size:32px;color:#000;font-family:'Liberation Sans', sans-serif;white-space:pre;transform:scaleY(1.077);transform-origin:0 41.09px;left:206.50px;">JFK</div>
<div style="top:723.97px;height:60px;line-height:60px;font-size:32px;color:#000;font-family:'Liberation Sans', sans-serif;white-space:pre;transform:scaleY(1.077);transform-origin:0 41.09px;left:376.50px;">LAX</div>
<div style="top:722.93px;height:60px;line-height:60px;font-size:35px;color:#000;font-family:'Liberation Sans', sans-serif;white-space:pre;letter-spacing:1.7px;right:1831.80px;text-align:right;">10<span style="margin-right:-2px">,</span>190</div>
<div style="top:722.93px;height:60px;line-height:60px;font-size:35px;color:#000;font-family:'Liberation Sans', sans-serif;white-space:pre;letter-spacing:1.7px;right:1639.30px;text-align:right;">10<span style="margin-right:-2px">,</span>045</div>
<div style="top:722.93px;height:60px;line-height:60px;font-size:35px;color:#000;font-family:'Liberation Sans', sans-serif;white-space:pre;letter-spacing:1.7px;right:1446.80px;text-align:right;">9<span style="margin-right:-2px">,</span>915</div>
<div style="top:722.93px;height:60px;line-height:60px;font-size:35px;color:#000;font-family:'Liberation Sans', sans-serif;white-space:pre;letter-spacing:1.7px;right:1254.30px;text-align:right;">4<span style="margin-right:-2px">,</span>924</div>
<div style="top:723.51px;height:60px;line-height:60px;font-size:33.3px;color:#000;font-family:'Liberation Sans', sans-serif;white-space:pre;transform:scaleY(1.04);transform-origin:0 41.55px;left:1318.50px;">New York, NY</div>
<div style="top:779.04px;height:60px;line-height:60px;font-size:32px;color:#000;font-family:'Liberation Sans', sans-serif;white-space:pre;transform:scaleY(1.077);transform-origin:0 41.09px;left:206.50px;">LAX</div>
<div style="top:779.04px;height:60px;line-height:60px;font-size:32px;color:#000;font-family:'Liberation Sans', sans-serif;white-space:pre;transform:scaleY(1.077);transform-origin:0 41.09px;left:376.50px;">JFK</div>
<div style="top:778.00px;height:60px;line-height:60px;font-size:35px;color:#000;font-family:'Liberation Sans', sans-serif;white-space:pre;letter-spacing:1.7px;right:1831.80px;text-align:right;">10<span style="margin-right:-2px">,</span>184</div>
<div style="top:778.00px;height:60px;line-height:60px;font-size:35px;color:#000;font-family:'Liberation Sans', sans-serif;white-space:pre;letter-spacing:1.7px;right:1639.30px;text-align:right;">10<span style="margin-right:-2px">,</span>041</div>
<div style="top:778.00px;height:60px;line-height:60px;font-size:35px;color:#000;font-family:'Liberation Sans', sans-serif;white-space:pre;letter-spacing:1.7px;right:1446.80px;text-align:right;">9<span style="margin-right:-2px">,</span>915</div>
<div style="top:778.00px;height:60px;line-height:60px;font-size:35px;color:#000;font-family:'Liberation Sans', sans-serif;white-space:pre;letter-spacing:1.7px;right:1254.30px;text-align:right;">4<span style="margin-right:-2px">,</span>924</div>
<div style="top:778.58px;height:60px;line-height:60px;font-size:33.3px;color:#000;font-family:'Liberation Sans', sans-serif;white-space:pre;transform:scaleY(1.04);transform-origin:0 41.55px;left:1318.50px;">Los Angeles, CA</div>
<div style="top:834.11px;height:60px;line-height:60px;font-size:32px;color:#000;font-family:'Liberation Sans', sans-serif;white-space:pre;transform:scaleY(1.077);transform-origin:0 41.09px;left:206.50px;">PHX</div>
<div style="top:834.11px;height:60px;line-height:60px;font-size:32px;color:#000;font-family:'Liberation Sans', sans-serif;white-space:pre;transform:scaleY(1.077);transform-origin:0 41.09px;left:376.50px;">DEN</div>
<div style="top:833.07px;height:60px;line-height:60px;font-size:35px;color:#000;font-family:'Liberation Sans', sans-serif;white-space:pre;letter-spacing:1.7px;right:1831.80px;text-align:right;">8<span style="margin-right:-2px">,</span>021</div>
<div style="top:833.07px;height:60px;line-height:60px;font-size:35px;color:#000;font-family:'Liberation Sans', sans-serif;white-space:pre;letter-spacing:1.7px;right:1639.30px;text-align:right;">9<span style="margin-right:-2px">,</span>375</div>
<div style="top:833.07px;height:60px;line-height:60px;font-size:35px;color:#000;font-family:'Liberation Sans', sans-serif;white-space:pre;letter-spacing:1.7px;right:1446.80px;text-align:right;">9<span style="margin-right:-2px">,</span>620</div>
<div style="top:833.07px;height:60px;line-height:60px;font-size:35px;color:#000;font-family:'Liberation Sans', sans-serif;white-space:pre;letter-spacing:1.7px;right:1254.30px;text-align:right;">4<span style="margin-right:-2px">,</span>815</div>
<div style="top:833.65px;height:60px;line-height:60px;font-size:33.3px;color:#000;font-family:'Liberation Sans', sans-serif;white-space:pre;transform:scaleY(1.04);transform-origin:0 41.55px;left:1318.50px;">Phoenix, AZ</div>
<div style="top:889.18px;height:60px;line-height:60px;font-size:32px;color:#000;font-family:'Liberation Sans', sans-serif;white-space:pre;transform:scaleY(1.077);transform-origin:0 41.09px;left:206.50px;">DEN</div>
<div style="top:889.18px;height:60px;line-height:60px;font-size:32px;color:#000;font-family:'Liberation Sans', sans-serif;white-space:pre;transform:scaleY(1.077);transform-origin:0 41.09px;left:376.50px;">PHX</div>
<div style="top:888.14px;height:60px;line-height:60px;font-size:35px;color:#000;font-family:'Liberation Sans', sans-serif;white-space:pre;letter-spacing:1.7px;right:1831.80px;text-align:right;">8<span style="margin-right:-2px">,</span>070</div>
<div style="top:888.14px;height:60px;line-height:60px;font-size:35px;color:#000;font-family:'Liberation Sans', sans-serif;white-space:pre;letter-spacing:1.7px;right:1639.30px;text-align:right;">9<span style="margin-right:-2px">,</span>360</div>
<div style="top:888.14px;height:60px;line-height:60px;font-size:35px;color:#000;font-family:'Liberation Sans', sans-serif;white-space:pre;letter-spacing:1.7px;right:1446.80px;text-align:right;">9<span style="margin-right:-2px">,</span>588</div>
<div style="top:888.14px;height:60px;line-height:60px;font-size:35px;color:#000;font-family:'Liberation Sans', sans-serif;white-space:pre;letter-spacing:1.7px;right:1254.30px;text-align:right;">4<span style="margin-right:-2px">,</span>735</div>
<div style="top:888.72px;height:60px;line-height:60px;font-size:33.3px;color:#000;font-family:'Liberation Sans', sans-serif;white-space:pre;transform:scaleY(1.04);transform-origin:0 41.55px;left:1318.50px;">Denver, CO</div>
<div style="top:944.25px;height:60px;line-height:60px;font-size:32px;color:#000;font-family:'Liberation Sans', sans-serif;white-space:pre;transform:scaleY(1.077);transform-origin:0 41.09px;left:206.50px;">BOS</div>
<div style="top:944.25px;height:60px;line-height:60px;font-size:32px;color:#000;font-family:'Liberation Sans', sans-serif;white-space:pre;transform:scaleY(1.077);transform-origin:0 41.09px;left:376.50px;">DCA</div>
<div style="top:943.21px;height:60px;line-height:60px;font-size:35px;color:#000;font-family:'Liberation Sans', sans-serif;white-space:pre;letter-spacing:1.7px;right:1831.80px;text-align:right;">11<span style="margin-right:-2px">,</span>265</div>
<div style="top:943.21px;height:60px;line-height:60px;font-size:35px;color:#000;font-family:'Liberation Sans', sans-serif;white-space:pre;letter-spacing:1.7px;right:1639.30px;text-align:right;">9<span style="margin-right:-2px">,</span>743</div>
<div style="top:943.21px;height:60px;line-height:60px;font-size:35px;color:#000;font-family:'Liberation Sans', sans-serif;white-space:pre;letter-spacing:1.7px;right:1446.80px;text-align:right;">9<span style="margin-right:-2px">,</span>657</div>
<div style="top:943.21px;height:60px;line-height:60px;font-size:35px;color:#000;font-family:'Liberation Sans', sans-serif;white-space:pre;letter-spacing:1.7px;right:1254.30px;text-align:right;">4<span style="margin-right:-2px">,</span>681</div>
<div style="top:943.79px;height:60px;line-height:60px;font-size:33.3px;color:#000;font-family:'Liberation Sans', sans-serif;white-space:pre;transform:scaleY(1.04);transform-origin:0 41.55px;left:1318.50px;">Boston, MA</div>
<div style="top:999.32px;height:60px;line-height:60px;font-size:32px;color:#000;font-family:'Liberation Sans', sans-serif;white-space:pre;transform:scaleY(1.077);transform-origin:0 41.09px;left:206.50px;">DCA</div>
<div style="top:999.32px;height:60px;line-height:60px;font-size:32px;color:#000;font-family:'Liberation Sans', sans-serif;white-space:pre;transform:scaleY(1.077);transform-origin:0 41.09px;left:376.50px;">BOS</div>
<div style="top:998.28px;height:60px;line-height:60px;font-size:35px;color:#000;font-family:'Liberation Sans', sans-serif;white-space:pre;letter-spacing:1.7px;right:1831.80px;text-align:right;">11<span style="margin-right:-2px">,</span>264</div>
<div style="top:998.28px;height:60px;line-height:60px;font-size:35px;color:#000;font-family:'Liberation Sans', sans-serif;white-space:pre;letter-spacing:1.7px;right:1639.30px;text-align:right;">9<span style="margin-right:-2px">,</span>745</div>
<div style="top:998.28px;height:60px;line-height:60px;font-size:35px;color:#000;font-family:'Liberation Sans', sans-serif;white-space:pre;letter-spacing:1.7px;right:1446.80px;text-align:right;">9<span style="margin-right:-2px">,</span>658</div>
<div style="top:998.28px;height:60px;line-height:60px;font-size:35px;color:#000;font-family:'Liberation Sans', sans-serif;white-space:pre;letter-spacing:1.7px;right:1254.30px;text-align:right;">4<span style="margin-right:-2px">,</span>680</div>
<div style="top:998.86px;height:60px;line-height:60px;font-size:33.3px;color:#000;font-family:'Liberation Sans', sans-serif;white-space:pre;transform:scaleY(1.04);transform-origin:0 41.55px;left:1318.50px;">Washington, DC</div>
<div style="left:195px;top:227px;width:1498px;height:819px;border:5px solid #468b99"></div>
<div style="left:1675px;top:289.5px;width:16px;height:101px;border-radius:8px;background:rgba(0,0,0,0.32)"></div>
<div style="left:2523px;top:175px;width:32px;height:894px;background:#fafafa;"></div>
<div style="left:2523px;top:175px;width:2.5px;height:894px;background:#dcdcdc;"></div>
<div style="left:2525px;top:208px;width:30px;height:2px;background:#dcdcdc;"></div>
<svg style="left:2525px;top:175px;" width="30" height="33" viewBox="0 0 30 33"><path d="M8 23 L16.5 7.5 L25 23 Z" fill="#c1c1c1"/></svg>
<div style="left:2530px;top:215px;width:23px;height:100px;border-radius:11.5px;background:#c1c1c1"></div>
<div style="left:2525px;top:1034px;width:30px;height:2px;background:#dcdcdc;"></div>
<svg style="left:2525px;top:1036px;" width="30" height="33" viewBox="0 0 30 33"><path d="M8 10 L25.5 10 L16.7 25 Z" fill="#c1c1c1"/></svg>
<div style="left:0px;top:1069px;width:2555px;height:34px;background:#fafafa;"></div>
<div style="left:0px;top:1069px;width:2555px;height:2px;background:#dcdcdc;"></div>
<div style="left:0px;top:1101px;width:2555px;height:2px;background:#dcdcdc;"></div>
<div style="left:31px;top:1071px;width:2px;height:30px;background:#dcdcdc;"></div>
<svg style="left:0px;top:1071px;" width="31" height="30" viewBox="0 0 31 30"><path d="M6 15.5 L20.5 7.3 L20.5 24.8 Z" fill="#c1c1c1"/></svg>
<div style="left:38px;top:1076px;width:492px;height:22px;border-radius:11px;background:#c1c1c1"></div>
<div style="left:2488px;top:1071px;width:2px;height:30px;background:#dcdcdc;"></div>
<svg style="left:2490px;top:1071px;" width="33" height="30" viewBox="0 0 33 30"><path d="M10 7.5 L25 16.3 L10 25 Z" fill="#c1c1c1"/></svg>
<div style="left:2523px;top:1069px;width:2.5px;height:32px;background:#dcdcdc;"></div>
<div style="left:0px;top:1103px;width:2555px;height:95px;background:#fafafa;"></div>
<div style="left:43px;top:1150.5px;width:30px;height:4.4px;background:#1e1e1e;"></div>
<div style="left:55.8px;top:1138px;width:4.4px;height:29.5px;background:#1e1e1e;"></div>
<div style="left:148.5px;top:1140.7px;width:38.5px;height:4.2px;background:#1e1e1e;"></div>
<div style="left:148.5px;top:1150.8px;width:38.5px;height:4.2px;background:#1e1e1e;"></div>
<div style="left:148.5px;top:1161.6px;width:38.5px;height:4.2px;background:#1e1e1e;"></div>
<div style="top:1122.34px;height:60px;line-height:60px;font-size:34.5px;color:#999;font-family:'Liberation Sans', sans-serif;white-space:pre;left:263.00px;">Flight data</div>
<div style="left:471px;top:1115px;width:211px;height:75px;border-radius:7px;background:#e3e3e3"></div>
<div style="top:1122.33px;height:60px;line-height:60px;font-size:35.1px;color:#1e1e1e;font-family:'Liberation Sans', sans-serif;white-space:pre;left:511.00px;">Analysis</div>
<div style="top:1122.26px;height:60px;line-height:60px;font-size:35.3px;color:#999;font-family:'Liberation Sans', sans-serif;white-space:pre;left:727.50px;">Airport Lookup</div>
<div style="top:1102.70px;height:60px;line-height:60px;font-size:29.7px;color:#222;font-family:'Liberation Sans', sans-serif;white-space:pre;right:17.00px;text-align:right;">Table Rows</div>
<div style="top:1140.87px;height:60px;line-height:60px;font-size:29.5px;color:#222;font-family:'Liberation Sans', sans-serif;white-space:pre;letter-spacing:0.4px;right:17.60px;text-align:right;">7,862</div>
</body></html>
